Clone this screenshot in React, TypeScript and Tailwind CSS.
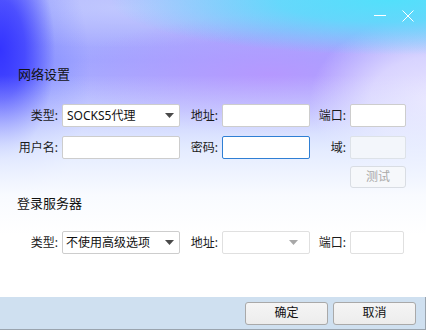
import React from "react";

const font = "font-['Noto_Sans','Noto_Sans_CJK_SC',sans-serif]";

function Arrow({ disabled }: { disabled?: boolean }) {
  return (
    <svg width="9" height="5" viewBox="0 0 9 5" className="shrink-0">
      <path d="M0 0 H9 L4.5 5 Z" fill={disabled ? "#a8a8a8" : "#4a4a4a"} />
    </svg>
  );
}

function Label({ w, children }: { w: string; children: React.ReactNode }) {
  return (
    <div className={`${w} shrink-0 flex justify-end pr-[4px] text-[12px] leading-[16px] text-[#1b1b1b]`}>
      {children}
    </div>
  );
}

export default function App() {
  return (
    <div className={`relative w-[426px] h-[330px] overflow-hidden bg-white ${font}`}>
      <div className="absolute inset-0 bg-[linear-gradient(180deg,rgba(255,255,255,0)_0px,rgba(255,255,255,0)_75px,rgba(236,243,255,0.7)_145px,rgba(250,252,255,0.97)_195px,#fff_235px),radial-gradient(ellipse_55px_110px_at_0px_50px,#3434ff_0%,rgba(52,52,255,0.75)_45%,rgba(52,52,255,0)_100%),radial-gradient(ellipse_90px_150px_at_0px_70px,rgba(80,100,255,0.55)_0%,rgba(80,100,255,0)_100%),radial-gradient(ellipse_280px_55px_at_390px_0px,#52e0fb_0%,rgba(82,224,251,0.8)_40%,rgba(82,224,251,0)_100%),radial-gradient(ellipse_120px_85px_at_430px_100px,#e8e4ff_0%,rgba(232,228,255,0.75)_50%,rgba(232,228,255,0)_100%),radial-gradient(ellipse_200px_60px_at_270px_75px,#b598ff_0%,rgba(181,152,255,0.5)_50%,rgba(181,152,255,0)_100%),radial-gradient(ellipse_200px_40px_at_120px_8px,rgba(196,204,255,0.8)_0%,rgba(196,204,255,0)_100%),linear-gradient(180deg,#b2b6fd_0px,#a2a6ff_60px,#b0b4ff_110px,#cad4ff_150px)]" />
      <div className="relative flex flex-col h-full">
        {/* title bar */}
        <div className="h-[31px] flex items-center justify-end pr-[12px] gap-[16px]">
          <div className="w-[12px] h-[1px] bg-white" />
          <svg width="12" height="12" viewBox="0 0 12 12">
            <path d="M0.5 0.5 L11.5 11.5 M11.5 0.5 L0.5 11.5" stroke="white" strokeWidth="1" />
          </svg>
        </div>

        <div className="mt-[35px] pl-[18px] h-[17px] text-[13px] leading-[17px] text-[#111]">网络设置</div>

        {/* row 1 */}
        <div className="mt-[21px] flex items-center h-[23px]">
          <Label w="w-[62px]">类型:</Label>
          <div className="w-[118px] h-[23px] bg-white border border-[#cdcdcd] rounded-[2px] flex items-center justify-between pl-[4px] pr-[5px] text-[12px] text-[#111]">
            <span>SOCKS5代理</span>
            <Arrow />
          </div>
          <Label w="w-[42px]">地址:</Label>
          <div className="w-[88px] h-[23px] bg-white border border-[#cdcdcd] rounded-[2px]" />
          <Label w="w-[40px]">端口:</Label>
          <div className="w-[56px] h-[23px] bg-white border border-[#cdcdcd] rounded-[2px]" />
        </div>

        {/* row 2 */}
        <div className="mt-[9px] flex items-center h-[23px]">
          <Label w="w-[62px]">用户名:</Label>
          <div className="w-[118px] h-[23px] bg-white border border-[#cdcdcd] rounded-[2px]" />
          <Label w="w-[42px]">密码:</Label>
          <div className="w-[88px] h-[23px] bg-white border border-[#2f7fd4] rounded-[2px]" />
          <Label w="w-[40px]">域:</Label>
          <div className="w-[56px] h-[23px] bg-[#f3f6fb] border border-[#dde2e8] rounded-[2px]" />
        </div>

        {/* test button */}
        <div className="mt-[7px] flex">
          <div className="ml-[350px] w-[56px] h-[22px] border border-[#d9dde3] rounded-[3px] bg-[#f6f8fb] flex items-center justify-center text-[12px] text-[#a9a9a9]">
            测试
          </div>
        </div>

        <div className="mt-[7px] pl-[17px] h-[17px] text-[13px] leading-[17px] text-[#111]">登录服务器</div>

        {/* row 3 */}
        <div className="mt-[19px] flex items-center h-[23px]">
          <Label w="w-[62px]">类型:</Label>
          <div className="w-[118px] h-[23px] bg-white border border-[#cdcdcd] rounded-[2px] flex items-center justify-between pl-[3px] pr-[5px] text-[12px] text-[#111]">
            <span>不使用高级选项</span>
            <Arrow />
          </div>
          <Label w="w-[42px]">地址:</Label>
          <div className="w-[88px] h-[23px] bg-white border border-[#e0e0e0] rounded-[2px] flex items-center justify-end pr-[11px]">
            <Arrow disabled />
          </div>
          <Label w="w-[40px]">端口:</Label>
          <div className="w-[54px] h-[23px] bg-white border border-[#e0e0e0] rounded-[2px]" />
        </div>

        {/* footer */}
        <div className="mt-auto h-[33px] bg-[#cfe0f0] border-r border-b border-[#9aa4ae] flex items-center justify-end pr-[9px] gap-[5px]">
          <div className="w-[83px] h-[23px] rounded-[3px] border border-[#a9a9a9] bg-[linear-gradient(#f5f5f5,#ececec)] flex items-center justify-center text-[12px] text-[#111]">
            确定
          </div>
          <div className="w-[83px] h-[23px] rounded-[3px] border border-[#a9a9a9] bg-[linear-gradient(#f5f5f5,#ececec)] flex items-center justify-center text-[12px] text-[#111]">
            取消
          </div>
        </div>
      </div>
    </div>
  );
}
